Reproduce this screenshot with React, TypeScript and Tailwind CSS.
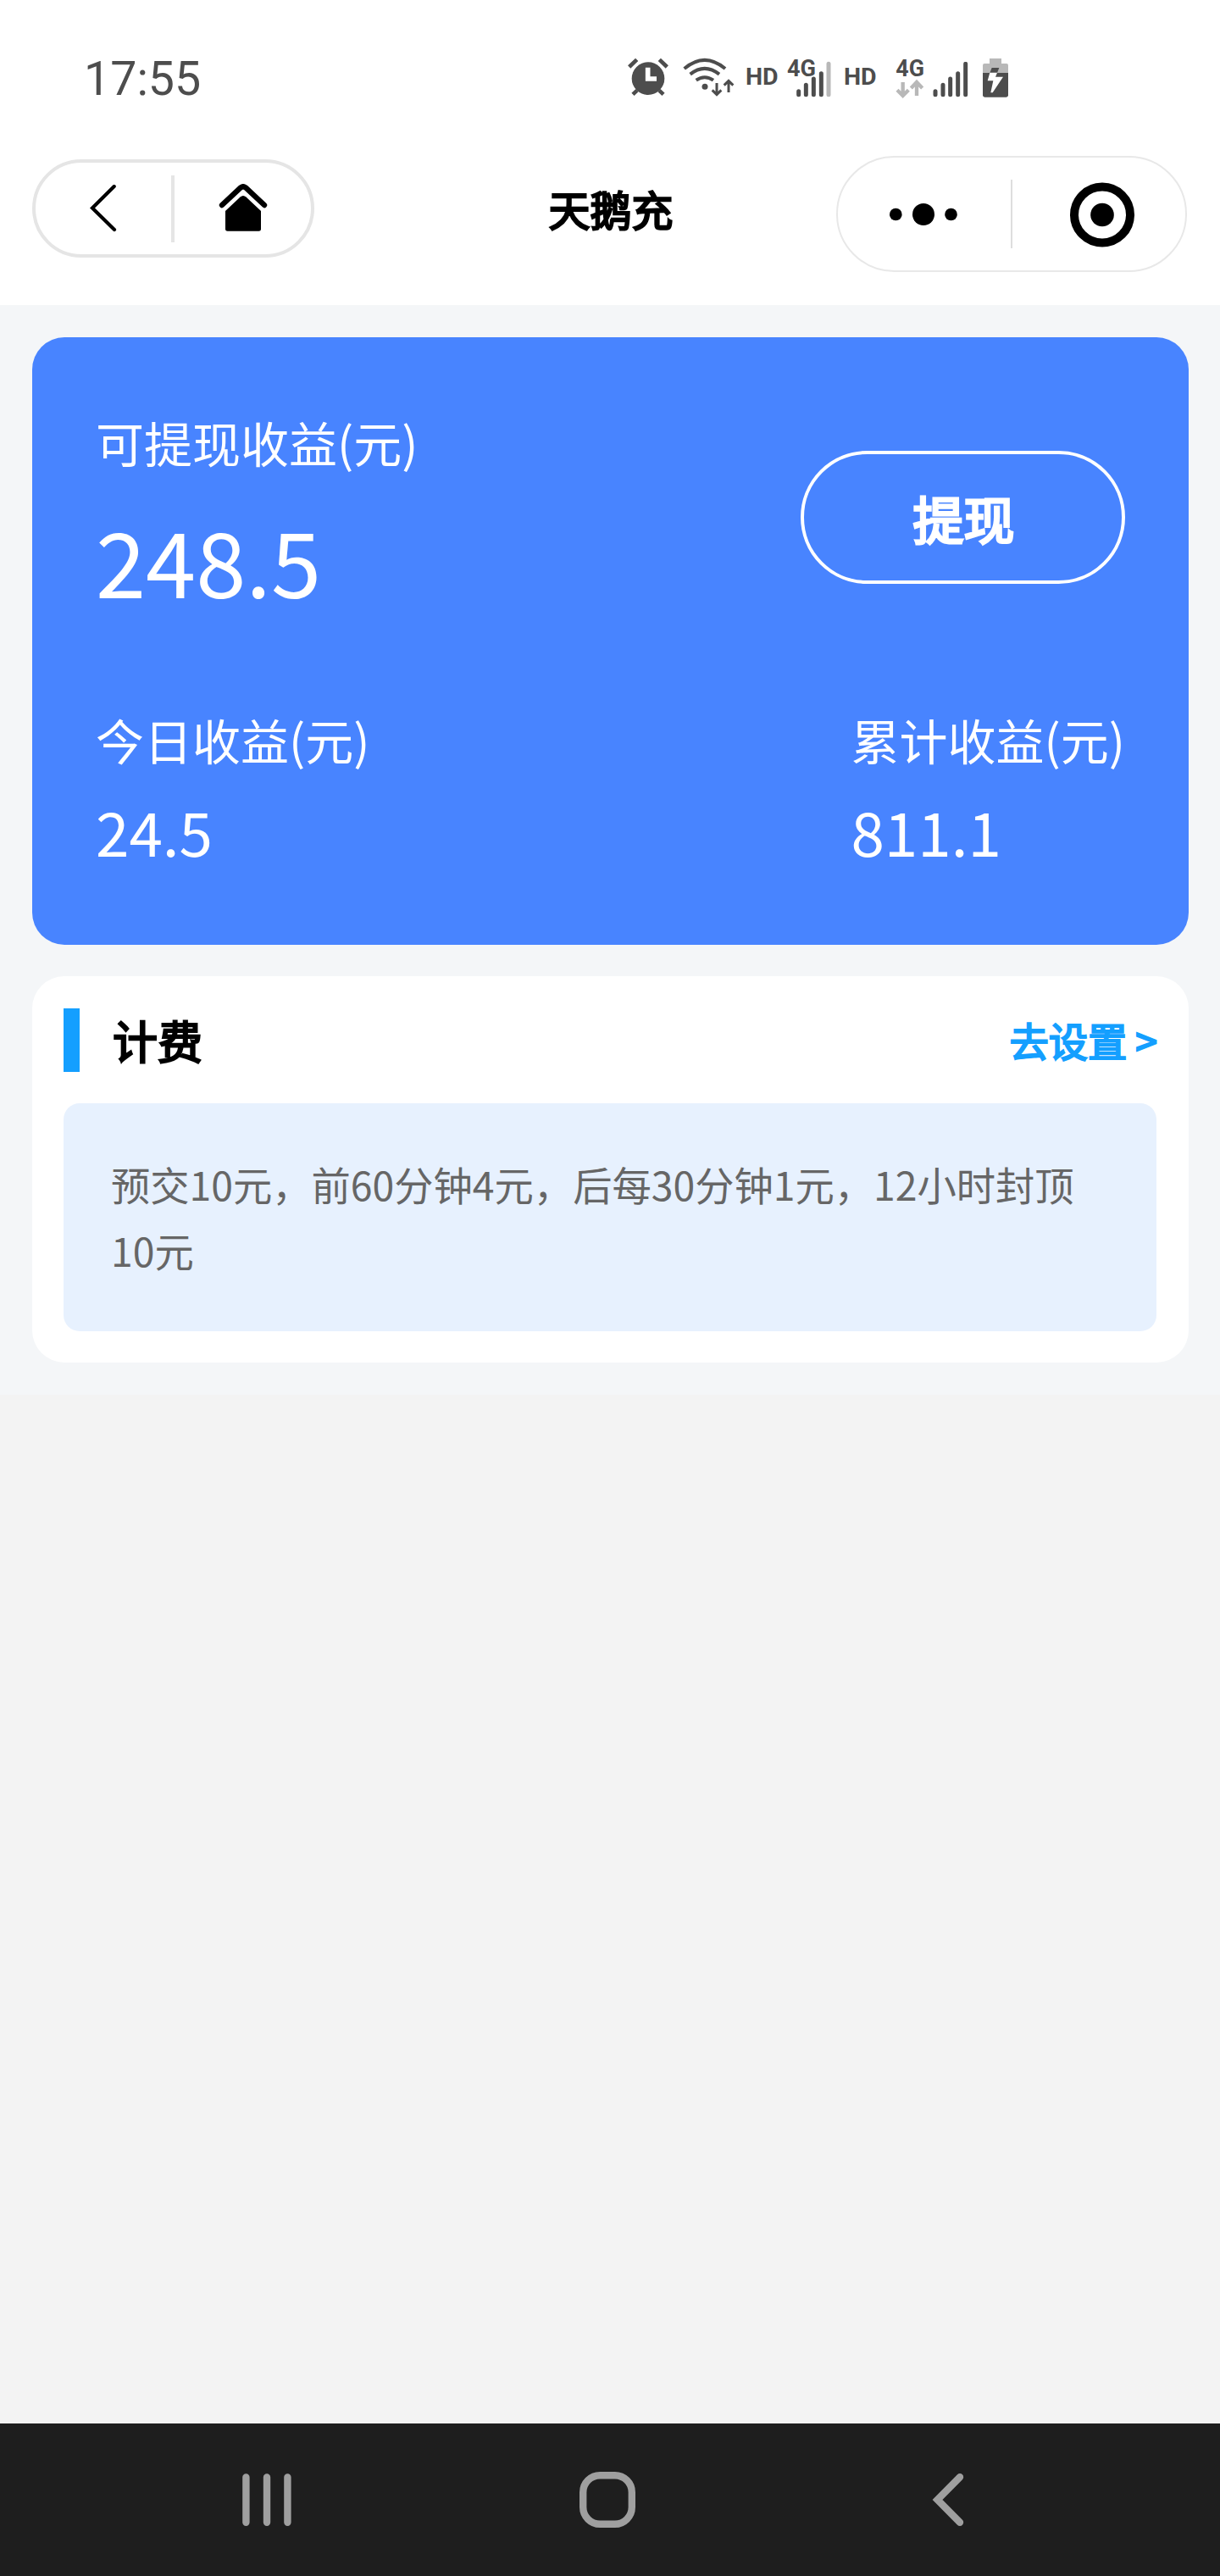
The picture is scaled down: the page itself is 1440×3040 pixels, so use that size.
// App.tsx
// Income page of the charging mini program:
// status bar, mini program header, income card, billing card and system navigation.

import type { ReactNode } from "react";

/////////////////////////////////////////////////////////////////////////////
// STATUS BAR

function AlarmIcon() {
  return (
    <svg className="h-[46px] w-[48px]" viewBox="63 56 144 138" fill="#4d4d4d">
      <circle cx="135" cy="130" r="58" />
      <g stroke="#4d4d4d" strokeWidth="14">
        <path d="M68 89 L95 63 M175 63 L202 89" />
        <path d="M81 186 L96 172 M189 186 L174 172" />
      </g>
      <path d="M134 91 V131 H165" fill="none" stroke="#fff" strokeWidth="17" />
    </svg>
  );
}

function WifiIcon() {
  return (
    <svg className="h-[46px] w-[61px]" viewBox="257 54 183 138" fill="none" stroke="#4d4d4d">
      <path d="M262 93 Q334 32 407 93" strokeWidth="12" />
      <path d="M283 113 Q334 72 386 113" strokeWidth="12" />
      <path d="M304 134 Q334 113 365 134" strokeWidth="12" />
      <circle cx="335" cy="157" r="10.5" fill="#4d4d4d" stroke="none" />
      <path d="M377 144 V184 M361 169 L377 185 L393 169" strokeWidth="9" />
      <path d="M419 177 V137 M403 152 L419 136 L435 152" strokeWidth="9" />
    </svg>
  );
}

function WeakSignal() {
  return (
    <svg className="h-[52px] w-[52px] overflow-visible" viewBox="627 39 156 156" strokeWidth="15" strokeLinecap="round" stroke="#4d4d4d">
      <text x="627" y="119" fontSize="83" fontWeight="700" fill="#4d4d4d" stroke="none" textLength="102" lengthAdjust="spacingAndGlyphs">
        4G
      </text>
      <path d="M668 173 V185 M694 151 V185 M721 129 V185 M748 110 V185" />
      <path d="M774 76 V185" stroke="#b8b8b8" />
    </svg>
  );
}

function DataIcon() {
  return (
    <svg className="h-[53px] w-[34px] overflow-visible" viewBox="1013 39 102 159" fill="none">
      <text x="1014" y="119" fontSize="83" fontWeight="700" fill="#4d4d4d" textLength="101" lengthAdjust="spacingAndGlyphs">
        4G
      </text>
      <g stroke="#b8b8b8" strokeWidth="13">
        <path d="M1039 141 V187 M1019 169 L1039 189 L1059 169" />
        <path d="M1088 189 V142 M1068 162 L1088 141 L1108 162" />
      </g>
    </svg>
  );
}

function FullSignal() {
  return (
    <svg className="h-[42px] w-[42px]" viewBox="1145 69 126 126" strokeWidth="15" strokeLinecap="round" stroke="#4d4d4d">
      <path d="M1154 173 V185 M1181 151 V185 M1207 129 V185 M1234 110 V185 M1261 76 V185" />
    </svg>
  );
}

function BatteryIcon() {
  return (
    <svg className="h-[46px] w-[30px]" viewBox="1320 57 90 138">
      <path d="M1344 57 H1386 V75 H1404 Q1410 75 1410 81 V108 H1320 V81 Q1320 75 1326 75 H1344 Z" fill="#b8b8b8" />
      <path d="M1320 108 H1410 V187 Q1410 194 1403 194 H1327 Q1320 194 1320 187 Z" fill="#4d4d4d" />
      <path d="M1352 90 H1378 L1371 108 H1345 Z" fill="#4d4d4d" />
      <path d="M1345 107 H1371 L1365 122 H1392 L1355 178 H1348 L1357 136 H1337 Z" fill="#fff" />
    </svg>
  );
}

function StatusBar() {
  return (
    <div className="flex h-[168px] items-start pl-[99px] pt-[68px] font-[Roboto,sans-serif] text-[#4d4d4d]">
      <span className="mt-px w-[642px] text-[55.5px] leading-[50px]">17:55</span>
      <AlarmIcon />
      <div className="ml-[17px]">
        <WifiIcon />
      </div>
      <span className="ml-[13px] mt-[8px] w-[46px] text-[28.5px] font-bold leading-[30px]">HD</span>
      <div className="-mt-[5px] ml-[3px]">
        <WeakSignal />
      </div>
      <span className="ml-[15px] mt-[8px] w-[43px] text-[28.5px] font-bold leading-[30px]">HD</span>
      <div className="-mt-[5px] ml-[18px]">
        <DataIcon />
      </div>
      <div className="ml-[10px] mt-[5px]">
        <FullSignal />
      </div>
      <div className="ml-[17px] mt-[1px]">
        <BatteryIcon />
      </div>
    </div>
  );
}

/////////////////////////////////////////////////////////////////////////////
// MINI PROGRAM HEADER

function Header() {
  return (
    <header className="grid h-[192px] grid-cols-[1fr_auto_1fr] items-start pl-[38px] pr-[39px] pt-4">
      {/* Back / home */}
      <div className="mt-1 flex h-[116px] w-[333px] items-center justify-self-start rounded-full border-4 border-[#e5e5e5]">
        <svg className="ml-[64px] h-[56px] w-[32px]" viewBox="106 217 32 56" fill="none" stroke="#000" strokeWidth="4.2" strokeLinecap="round">
          <path d="M134.7 219 L109 244.5 L135 270" />
        </svg>
        <div className="ml-[64px] h-[79px] w-1 bg-[#e5e5e5]" />
        <svg className="ml-[52px] h-[58px] w-[58px]" viewBox="258 217 58 58">
          <path d="M262 242 L284 221.5 Q287 219 290 221.5 L312 242" fill="none" stroke="#000" strokeWidth="6.4" strokeLinecap="round" />
          <path d="M266 249 L283.5 232.5 Q287 229.5 290.5 232.5 L308 249 V270.5 Q308 272.7 305.5 272.7 H268.5 Q266 272.7 266 270.5 Z" />
        </svg>
      </div>

      <h1 className="ml-[3px] mt-[32px] text-[49px] leading-[60px] text-black [-webkit-text-stroke:2.4px_#000]">天鹅充</h1>

      {/* Menu / close */}
      <div className="flex h-[137px] w-[414px] items-center justify-self-end rounded-full border-2 border-[#e8e8e8]">
        <svg className="ml-[60px] h-[28px] w-[82px]" viewBox="1049 239 82 28">
          <circle cx="1057.3" cy="253" r="7.3" />
          <circle cx="1090" cy="253" r="13" />
          <circle cx="1122.5" cy="253" r="7.3" />
        </svg>
        <div className="ml-[62px] h-[81px] w-[2px] bg-[#dedede]" />
        <svg className="ml-[67px] h-[78px] w-[78px]" viewBox="0 0 78 78">
          <circle cx="39" cy="39.5" r="33" fill="none" stroke="#000" strokeWidth="10" />
          <circle cx="39" cy="39.5" r="13.8" />
        </svg>
      </div>
    </header>
  );
}

/////////////////////////////////////////////////////////////////////////////
// INCOME CARD

function Amount({ label, value }: { label: string; value: string }) {
  return (
    <div>
      <p className="text-[57px] leading-[84px]">{label}</p>
      <p className="mt-[13px] text-[71px] leading-[106px]">{value}</p>
    </div>
  );
}

function IncomeCard() {
  return (
    <section className="h-[717px] rounded-[38px] bg-[#4884ff] pl-[75px] pr-[75px] pt-[81px] text-white">
      <div className="flex items-start justify-between">
        <div>
          <p className="text-[57px] leading-[84px]">可提现收益(元)</p>
          <p className="mt-[19px] text-[106.5px] leading-[156px]">248.5</p>
        </div>
        <button className="mt-[53px] h-[157px] w-[383px] rounded-full border-4 border-white pl-[2px] text-[60px] leading-[84px] [-webkit-text-stroke:3px_#fff]">
          提现
        </button>
      </div>
      <div className="mt-[92px] flex justify-between">
        <Amount label="今日收益(元)" value="24.5" />
        <Amount label="累计收益(元)" value="811.1" />
      </div>
    </section>
  );
}

/////////////////////////////////////////////////////////////////////////////
// BILLING CARD

function BillingCard({ children }: { children: ReactNode }) {
  return (
    <section className="mt-[37px] h-[456px] rounded-[38px] bg-white pl-[37px] pr-[38px] pt-[38px]">
      <div className="flex h-[75px] items-center">
        <div className="h-[75px] w-[19px] bg-[#149fff]" />
        <h2 className="ml-[39px] text-[53px] leading-[75px] text-black [-webkit-text-stroke:2.4px_#000]">计费</h2>
        <a className="-mt-[2px] ml-auto -mr-px flex text-[46.3px] leading-[75px] text-[#149fff] [-webkit-text-stroke:2.2px_#149fff]">
          去设置<span className="ml-[10px]">&gt;</span>
        </a>
      </div>
      <div className="mt-[37px] h-[269px] rounded-[19px] bg-[#e7f1fe] pl-[56px] pr-[57px] pt-[56px] text-[46.3px] leading-[78px] text-[#666]">
        {children}
      </div>
    </section>
  );
}

/////////////////////////////////////////////////////////////////////////////
// SYSTEM NAVIGATION

function NavBar() {
  return (
    <nav className="flex h-[180px] items-center bg-[#1e1e1e] pl-[285px]">
      <svg className="h-[66px] w-[60px]" viewBox="285 2917 60 66" stroke="#9f9f9f" strokeWidth="8.4" strokeLinecap="round">
        <path d="M290.4 2923.4 V2976.8 M315 2923.4 V2976.8 M339.4 2923.4 V2976.8" />
      </svg>
      <svg className="ml-[339px] h-[66px] w-[66px]" viewBox="0 0 66 66" fill="none">
        <rect x="4.2" y="4.2" width="57.6" height="57.6" rx="20" stroke="#9f9f9f" strokeWidth="8.4" />
      </svg>
      <svg className="ml-[350px] h-[66px] w-[38px]" viewBox="1100 2917 38 66" fill="none" stroke="#9f9f9f" strokeWidth="8.4" strokeLinecap="round">
        <path d="M1133 2923.3 L1106.5 2950 L1133 2976.7" />
      </svg>
    </nav>
  );
}

export default function App() {
  return (
    <div className="flex h-[3040px] w-[1440px] flex-col overflow-hidden bg-[#f3f3f3] font-['Noto_Sans_CJK_SC',sans-serif]">
      <div className="bg-white">
        <StatusBar />
        <Header />
      </div>
      <main className="h-[1286px] bg-[#f4f6f8] pl-[38px] pr-[37px] pt-[38px]">
        <IncomeCard />
        <BillingCard>预交10元，前60分钟4元，后每30分钟1元，12小时封顶10元</BillingCard>
      </main>
      <div className="flex-1" />
      <NavBar />
    </div>
  );
}
